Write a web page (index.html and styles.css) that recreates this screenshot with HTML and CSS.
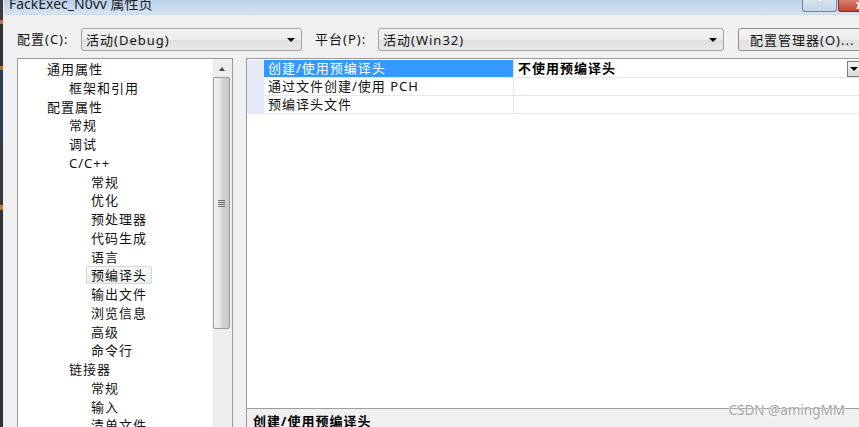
FILE: index.html
```html
<!DOCTYPE html>
<html lang="zh-CN">
<head>
<meta charset="utf-8">
<title>FackExec_N0vv 属性页</title>
<link rel="stylesheet" href="styles.css">
</head>
<body>
<div class="screen">
  <div class="desk"></div>
  <div class="window">
    <div class="titlebar">
      <span class="title">FackExec_N0vv 属性页</span>
      <div class="caption-btns">
        <span class="cap-btn help">?</span>
        <span class="cap-btn close">x</span>
      </div>
    </div>
    <div class="toolbar">
      <span class="lbl lbl-config">配置(C):</span>
      <div class="combo combo-config"><span class="combo-text">活动(Debug)</span><i class="tri"></i></div>
      <span class="lbl lbl-platform">平台(P):</span>
      <div class="combo combo-platform"><span class="combo-text">活动(Win32)</span><i class="tri"></i></div>
      <div class="btn mgr">配置管理器(O)...</div>
    </div>
    <div class="main">
      <div class="tree">
        <ul class="tree-list">
          <li class="l0">通用属性</li>
          <li class="l1">框架和引用</li>
          <li class="l0">配置属性</li>
          <li class="l1">常规</li>
          <li class="l1">调试</li>
          <li class="l1">C/C++</li>
          <li class="l2">常规</li>
          <li class="l2">优化</li>
          <li class="l2">预处理器</li>
          <li class="l2">代码生成</li>
          <li class="l2">语言</li>
          <li class="l2"><span class="sel">预编译头</span></li>
          <li class="l2">输出文件</li>
          <li class="l2">浏览信息</li>
          <li class="l2">高级</li>
          <li class="l2">命令行</li>
          <li class="l1">链接器</li>
          <li class="l2">常规</li>
          <li class="l2">输入</li>
          <li class="l2">清单文件</li>
        </ul>
        <div class="vscroll">
          <div class="sb-up"><i class="tri-up"></i></div>
          <div class="sb-thumb"><i class="grip"></i></div>
        </div>
      </div>
      <div class="props">
        <div class="grid-area">
          <div class="grid">
            <div class="gutter"></div>
            <div class="rows">
              <div class="row">
                <div class="cell name selected">创建/使用预编译头</div>
                <div class="cell value"><b>不使用预编译头</b><span class="dd"><i class="tri"></i></span></div>
              </div>
              <div class="row">
                <div class="cell name">通过文件创建/使用 PCH</div>
                <div class="cell value"></div>
              </div>
              <div class="row">
                <div class="cell name">预编译头文件</div>
                <div class="cell value"></div>
              </div>
            </div>
          </div>
        </div>
        <div class="desc">创建/使用预编译头</div>
      </div>
    </div>
  </div>
  <div class="watermark">CSDN @amingMM</div>
</div>
</body>
</html>
```

FILE: styles.css
```css
* { box-sizing: border-box; }
html, body { margin: 0; padding: 0; }
body {
  width: 859px;
  height: 427px;
  overflow: hidden;
  background: #f0f0f0;
  font-family: "Noto Sans", "Noto Sans CJK SC", sans-serif;
  font-size: 13px;
  color: #111;
}
.screen {
  position: relative;
  display: flex;
  width: 859px;
  height: 427px;
  overflow: hidden;
}
.desk {
  width: 3px;
  flex: none;
  background: linear-gradient(#3b3b3b 0, #3b3b3b 20px, #c0703a 20px, #c0703a 24px, #333 24px, #333 66px, #b86a2f 66px, #b86a2f 70px, #2e3d52 70px, #2e3d52 140px, #3a3a3a 140px, #3a3a3a 205px, #c4772e 205px, #c4772e 210px, #333 210px);
}
.window {
  flex: 1;
  min-width: 0;
  border-left: 1px solid #e4ecf4;
  display: flex;
  flex-direction: column;
}
.titlebar {
  height: 15px;
  flex: none;
  display: flex;
  align-items: flex-start;
  background: linear-gradient(#b9cfe8, #d5e3f2);
  border-bottom: 1px solid #cfd9e4;
  overflow: hidden;
}
.title {
  font-size: 14px;
  line-height: 14px;
  margin: -3px 0 0 5px;
  color: #1b1b1b;
  white-space: nowrap;
}
.caption-btns {
  margin-left: auto;
  margin-right: -22px;
  display: flex;
  gap: 1px;
}
.cap-btn {
  height: 12px;
  display: flex;
  align-items: flex-end;
  justify-content: center;
  font-size: 12px;
  line-height: 12px;
  font-weight: bold;
  border: 1px solid #71869f;
  border-top: none;
  border-radius: 0 0 3px 3px;
}
.help {
  width: 35px;
  background: linear-gradient(#d9e4f0, #c3d3e6);
  color: #f4f7fb;
  text-shadow: 0 0 1px #6d7f96;
}
.close {
  width: 43px;
  background: linear-gradient(#d7816f, #c2432c);
  border-color: #83301f;
  color: #fff;
}
.toolbar {
  height: 36px;
  flex: none;
  display: flex;
  align-items: flex-end;
  padding: 0 0 0 13px;
  letter-spacing: 1px;
  white-space: nowrap;
}
.lbl {
  flex: none;
  height: 23px;
  line-height: 23px;
}
.lbl-config { width: 64px; }
.lbl-platform { width: 63px; margin-left: 13px; }
.combo, .btn {
  flex: none;
  height: 23px;
  border: 1px solid #a3a3a3;
  border-radius: 3px;
  background: linear-gradient(#f3f3f3 0, #ececec 50%, #dfdfdf 51%, #e7e7e7 100%);
  display: flex;
  align-items: center;
}
.combo { padding: 0 6px 0 4px; }
.combo-text { flex: 1; }
.combo-config { width: 221px; }
.combo-platform { width: 346px; }
.btn {
  width: 130px;
  margin-left: 14px;
  padding-left: 11px;
  border-color: #8e8f8f;
}
.tri {
  display: block;
  width: 0;
  height: 0;
  border-left: 4px solid transparent;
  border-right: 4px solid transparent;
  border-top: 4px solid #000;
}
.main {
  flex: 1;
  display: flex;
  margin-top: 7px;
  padding-left: 13px;
  min-height: 0;
}
.tree {
  width: 216px;
  height: 380px;
  flex: none;
  display: flex;
  background: #fff;
  border: 1px solid #9a9a9a;
}
.tree-list {
  flex: 1;
  list-style: none;
  margin: 0;
  padding: 1px 0 0;
  letter-spacing: 1px;
}
.tree-list li {
  height: 18.75px;
  line-height: 18.75px;
  white-space: nowrap;
}
.l0 { padding-left: 29px; }
.l1 { padding-left: 51px; }
.l2 { padding-left: 73px; }
.sel {
  display: inline-block;
  vertical-align: top;
  height: 18px;
  line-height: 16px;
  margin-left: -5px;
  padding: 0 4px 0 4px;
  border: 1px solid #d6d6d6;
  border-radius: 2px;
  background: linear-gradient(#f8f8f8, #efefef);
}
.vscroll {
  width: 20px;
  flex: none;
  background: #ededed;
  border-left: 1px solid #f6f6f6;
  padding: 1px 2px 0 0;
  display: flex;
  flex-direction: column;
  align-items: stretch;
}
.sb-up {
  height: 17px;
  display: flex;
  align-items: center;
  justify-content: center;
}
.tri-up {
  display: block;
  width: 0;
  height: 0;
  border-left: 3.5px solid transparent;
  border-right: 3.5px solid transparent;
  border-bottom: 4px solid #444;
}
.sb-thumb {
  height: 252px;
  border: 1px solid #9b9b9b;
  border-radius: 2px;
  background: linear-gradient(90deg, #f2f2f2 0, #e4e4e4 45%, #d2d2d2 55%, #c8c8c8 100%);
  display: flex;
  align-items: center;
  justify-content: center;
}
.grip {
  display: block;
  width: 7px;
  height: 7px;
  background: repeating-linear-gradient(#6f6f6f 0, #6f6f6f 1px, transparent 1px, transparent 2px);
}
.props {
  width: 617px;
  flex: none;
  margin-left: 13px;
  height: 380px;
  border: 1px solid #9a9a9a;
  background: #fff;
  display: flex;
  flex-direction: column;
  letter-spacing: 1px;
}
.grid-area {
  height: 349px;
  flex: none;
  padding-top: 1px;
  background: #fff;
}
.grid {
  display: flex;
  align-items: stretch;
}
.gutter {
  width: 17px;
  flex: none;
  background: #e6e9f7;
}
.rows { flex: 1; }
.row {
  display: flex;
  height: 18px;
  border-bottom: 1px solid #e4e7f5;
}
.cell {
  height: 17px;
  line-height: 17px;
  white-space: nowrap;
}
.name {
  width: 250px;
  flex: none;
  padding-left: 4px;
  border-right: 1px solid #e4e7f5;
}
.name.selected {
  background: #3399ff;
  color: #fff;
}
.value {
  flex: 1;
  display: flex;
  align-items: center;
  padding-left: 4px;
  padding-right: 1px;
}
.value b { flex: 1; font-weight: bold; color: #000; }
.dd {
  width: 14px;
  height: 16px;
  border: 1px solid #7a7a7a;
  background: linear-gradient(#f5f5f5, #d9d9d9);
  display: flex;
  align-items: center;
  justify-content: center;
}
.desc {
  flex: 1;
  border-top: 1px solid #9c9c9c;
  background: #f0f0f0;
  padding: 4px 0 0 6px;
  line-height: 16px;
  font-weight: bold;
  color: #000;
}
.watermark {
  position: absolute;
  right: 14px;
  top: 401px;
  font-family: "Noto Sans", sans-serif;
  font-size: 13.5px;
  line-height: 18px;
  color: #a3a3a3;
  text-shadow: 0 0 2px #fff, 0 0 1px #fff;
}
```
